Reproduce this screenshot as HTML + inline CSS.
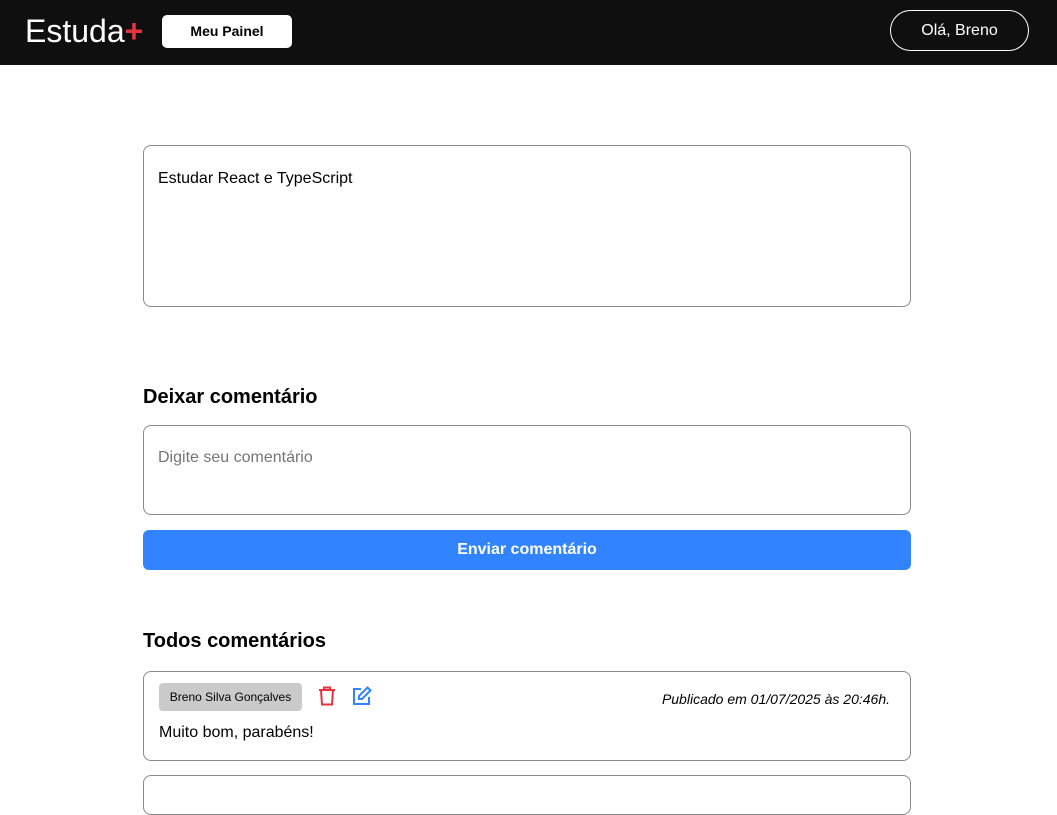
<!DOCTYPE html>
<html><head><meta charset="utf-8"><style>
*{box-sizing:border-box;margin:0;padding:0}
body{width:1057px;height:779px;overflow:hidden;background:#fff;font-family:"Liberation Sans",Arial,sans-serif;color:#000;position:relative}
header{position:absolute;left:0;top:0;width:1057px;height:65px;background:#0f0f0f}
.logo{position:absolute;left:25px;top:12px;color:#fff;font-size:32px;line-height:38px}
.logo span{color:#ea3140;font-weight:bold}
.painel{position:absolute;left:162px;top:15px;width:130px;height:33px;background:#fff;border-radius:5px;font-size:14px;font-weight:bold;text-align:center;line-height:33px}
.ola{position:absolute;left:890px;top:10px;width:139px;height:41px;border:1px solid #fff;border-radius:21px;color:#fff;font-size:16px;text-align:center;line-height:39px}
.box{position:absolute;left:143px;width:768px;border:1px solid #8a8a8a;border-radius:8px}
h2{position:absolute;left:143px;font-size:20px;font-weight:bold}
.btn{position:absolute;left:143px;top:530px;width:768px;height:40px;background:#3183ff;border-radius:6px;color:#fff;font-weight:bold;font-size:16px;text-align:center;line-height:40px}
</style></head><body>
<header><div class="logo">Estuda<span>+</span></div><div class="painel">Meu Painel</div><div class="ola">Olá, Breno</div></header>
<div class="box" style="top:145px;height:162px;padding:24px 14px;font-size:16px">Estudar React e TypeScript</div>
<h2 style="top:386px">Deixar comentário</h2>
<div class="box" style="top:425px;height:90px;padding:23px 14px;font-size:16px;color:#757575">Digite seu comentário</div>
<div class="btn">Enviar comentário</div>
<h2 style="top:630px">Todos comentários</h2>
<div class="box" style="top:671px;height:90px">
<div style="position:absolute;left:15px;top:11px;width:143px;height:28px;background:#cacaca;border-radius:4px;font-size:12px;text-align:center;line-height:28px">Breno Silva Gonçalves</div>
<svg style="position:absolute;left:174px;top:14px" width="18" height="20" viewBox="0 0 18 20" fill="none" stroke="#ea3140" stroke-width="2"><path d="M1 4h16M6 4V1.5h6V4M3 4l1 14.5h10L15 4"/></svg>
<svg style="position:absolute;left:208px;top:14px" width="20" height="20" viewBox="0 0 20 20" fill="none" stroke="#3183ff" stroke-width="2"><path d="M9 3H2v15h15v-7"/><path d="M15.5 1.5l3 3L10 13H7v-3z"/></svg>
<div style="position:absolute;right:20px;top:19px;font-size:14px;font-style:italic">Publicado em 01/07/2025 às 20:46h.</div>
<div style="position:absolute;left:15px;top:52px;font-size:16px">Muito bom, parabéns!</div>
</div>
<div class="box" style="top:775px;height:40px"></div>
</body></html>
